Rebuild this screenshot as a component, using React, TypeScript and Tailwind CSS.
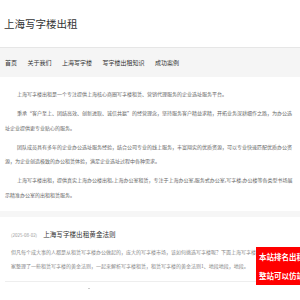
export default function App() {
  const nav = ['首页', '关于我们', '上海写字楼', '写字楼出租知识', '成功案例'];

  const paras = [
    '上海写字楼出租是一个专注提供上海核心商圈写字楼租赁、营销代理服务的企业选址服务平台。',
    '秉承“客户至上、团结高效、创新进取、诚信共赢”的经营理念，坚持服务客户精益求精，开拓业务深耕细作之路，为办公选址企业提供更专业贴心的服务。',
    '团队成员具有多年的企业办公选址服务经验，结合公司专业的线上服务，丰富翔实的优质资源，可以专业快速匹配优质办公资源，为企业创造极致的办公租赁体验，满足企业选址过程中各种需求。',
    '上海写字楼出租，提供真实上海办公楼出租,上海办公室租赁，专注于上海办公室,服务式办公室,写字楼,办公楼等各类型书场展示精准办公室的出租租赁服务。',
  ];

  return (
    <div
      className="relative w-[300px] h-[300px] overflow-hidden bg-white"
      style={{ fontFamily: '"Noto Sans CJK SC", "Noto Sans", sans-serif' }}
    >
      {/* 标题 */}
      <div className="h-[47px] px-[4px] flex items-center">
        <h1 className="text-[10.5px] text-[#333] font-normal">上海写字楼出租</h1>
      </div>

      {/* 导航 */}
      <div className="h-[30px] bg-[#f5f5f5] border-t border-[#e6e6e6] flex items-center gap-[10.5px] px-[5px] text-[6px] text-[#333]">
        {nav.map((item) => (
          <span key={item}>{item}</span>
        ))}
      </div>

      {/* 简介 */}
      <div className="px-[5px] pt-[10px] text-[5px] leading-[14.5px] text-[#666]">
        {paras.map((p, i) => (
          <p key={i} className="indent-[12px] mb-[4.5px]">
            {p}
          </p>
        ))}
      </div>

      {/* 分隔 */}
      <div className="mt-[9px] h-[6px] bg-[#f6f6f6]" />

      {/* 文章 */}
      <div className="px-[5px]">
        <div className="px-[6px] pt-[13px] pb-[8px] border-b border-[#eee]">
          <div className="flex items-baseline gap-[6px]">
            <span className="text-[4.5px] text-[#999]">(2025-08-02)</span>
            <span className="text-[6.6px] text-[#333]">上海写字楼出租黄金法则</span>
          </div>
          <p className="mt-[5px] text-[5px] leading-[14px] text-[#888]">
            但凡每个成大事的人都是从租赁写字楼办公做起的，庞大的写字楼市场，该如何挑选写字楼呢？下面上海写字楼出租小编为大家整理了一些租赁写字楼的黄金法则，一起来解析写字楼租赁，租赁写字楼的黄金法则1、地段地段，地段。
          </p>
        </div>
        <div className="ml-[83px] mt-[6px] w-[2px] h-[1px] bg-[#ccc]" />
      </div>

      {/* 悬浮广告 */}
      <div className="absolute left-[256px] top-[247px] w-[52px] h-[38px] bg-[#ff0000] pl-[3px] flex flex-col justify-center text-white font-bold text-[7.5px] leading-[19px] whitespace-nowrap">
        <span>本站排名出租</span>
        <span>整站可以仿站</span>
      </div>
    </div>
  );
}
